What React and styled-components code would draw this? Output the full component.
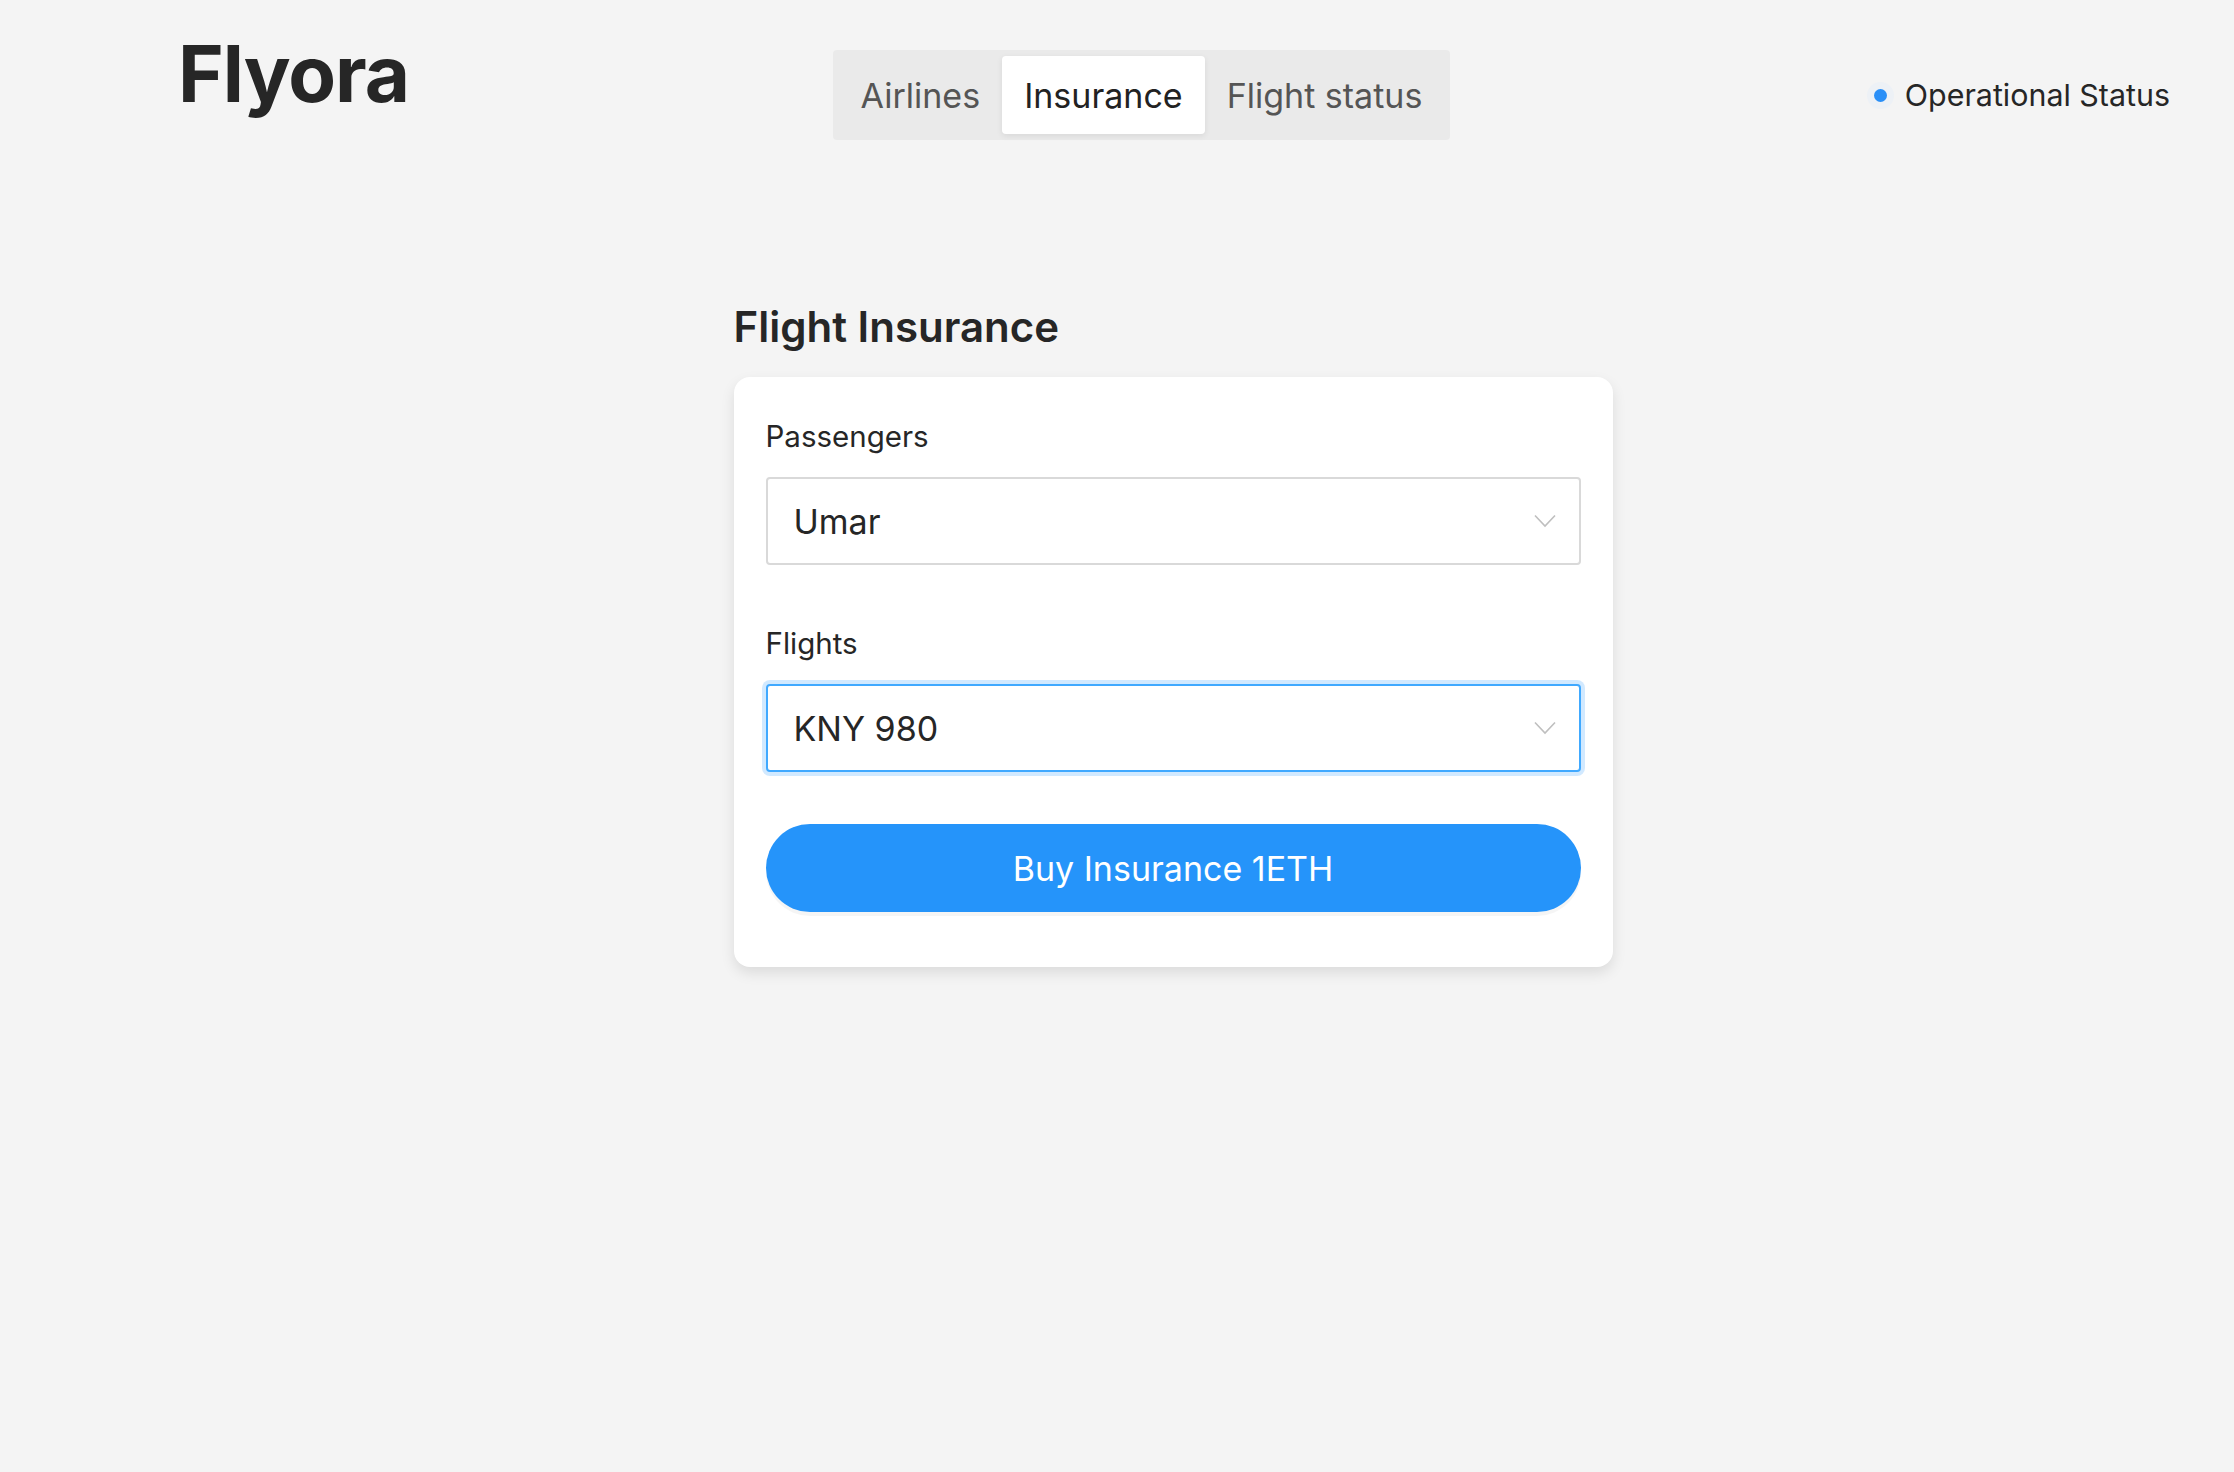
import React from 'react'
import styled, { createGlobalStyle } from 'styled-components'

const GlobalStyle = createGlobalStyle`
    html, body {
        margin: 0;
        padding: 0;
        background: #f4f4f4;
        font-family: Inter, "Noto Sans", sans-serif;
        color: #262626;
    }
    * {
        box-sizing: border-box;
    }
`

const Page = styled.div`
    min-height: 1472px;
    padding: 0 64px 0 176px;
`
const Header = styled.header`
    display: flex;
    align-items: center;
    justify-content: space-between;
    padding-top: 50px;
`
const Logo = styled.h1`
    align-self: flex-start;
    margin: -16px 0 0 2px;
    font-size: 78px;
    line-height: 80px;
    font-weight: 700;
    letter-spacing: -1px;
    color: #262626;
`
const Tabs = styled.nav`
    display: flex;
    padding: 6px;
    background: #eaeaea;
    border-radius: 4px;
`
const Tab = styled.div`
    height: 78px;
    padding: 0 22px;
    display: flex;
    align-items: center;
    font-size: 34px;
    color: ${props => props.$active ? '#222' : '#555'};
    background: ${props => props.$active ? '#fff' : 'transparent'};
    border-radius: 4px;
    box-shadow: ${props => props.$active ? '0 2px 6px rgba(0,0,0,0.08)' : 'none'};
    cursor: pointer;
`
const Status = styled.div`
    display: flex;
    align-items: center;
    gap: 18px;
    font-size: 30.4px;
    color: #262626;
`
const Dot = styled.span`
    width: 13px;
    height: 13px;
    border-radius: 50%;
    background: #2a8ff7;
    box-shadow: 0 0 0 7px #edf1f6;
`
const Main = styled.main`
    width: 879px;
    margin: 162px auto 0;
`
const Heading = styled.h2`
    margin: 0 0 25px;
    font-size: 42px;
    line-height: 50px;
    font-weight: 600;
    color: #262626;
`
const Card = styled.div`
    background: #fff;
    border-radius: 16px;
    padding: 42px 32px 55px;
    box-shadow: 0 6px 14px rgba(0, 0, 0, 0.1);
`
const Field = styled.div`
    margin-bottom: ${props => props.$last ? '52px' : '61px'};
`
const Label = styled.div`
    font-size: 29.5px;
    line-height: 34px;
    margin-bottom: 24px;
    color: #262626;
`
const SelectBox = styled.div`
    height: 88px;
    padding: 0 26px;
    display: flex;
    align-items: center;
    justify-content: space-between;
    background: #fff;
    border: 2px solid ${props => props.$focused ? '#40a9ff' : '#d9d9d9'};
    border-radius: 4px;
    box-shadow: ${props => props.$focused ? '0 0 0 4px rgba(24, 144, 255, 0.2)' : 'none'};
    font-size: 34px;
    color: #262626;
    cursor: pointer;
`
const Chevron = styled.svg`
    width: 22px;
    height: 14px;
    margin-right: -3px;
`
const BuyButton = styled.button`
    width: 100%;
    height: 88px;
    border: none;
    border-radius: 44px;
    background: #2594fa;
    color: #fff;
    font-family: Inter, "Noto Sans", sans-serif;
    font-size: 34px;
    box-shadow: 0 4px 0 rgba(0, 0, 0, 0.04);
    cursor: pointer;
`

const Select = ({ value, focused }) => (
    <SelectBox $focused={focused}>
        <span>{value}</span>
        <Chevron viewBox="0 0 22 14">
            <polyline points="1,1.5 11,12 21,1.5" fill="none" stroke="#bfbfbf" strokeWidth="1.6" />
        </Chevron>
    </SelectBox>
)

export default function App() {
    return (
        <Page>
            <GlobalStyle />
            <Header>
                <Logo>Flyora</Logo>
                <Tabs>
                    <Tab>Airlines</Tab>
                    <Tab $active>Insurance</Tab>
                    <Tab>Flight status</Tab>
                </Tabs>
                <Status>
                    <Dot />
                    Operational Status
                </Status>
            </Header>
            <Main>
                <Heading>Flight Insurance</Heading>
                <Card>
                    <Field>
                        <Label>Passengers</Label>
                        <Select value="Umar" />
                    </Field>
                    <Field $last>
                        <Label>Flights</Label>
                        <Select value="KNY 980" focused />
                    </Field>
                    <BuyButton>Buy Insurance 1ETH</BuyButton>
                </Card>
            </Main>
        </Page>
    )
}
